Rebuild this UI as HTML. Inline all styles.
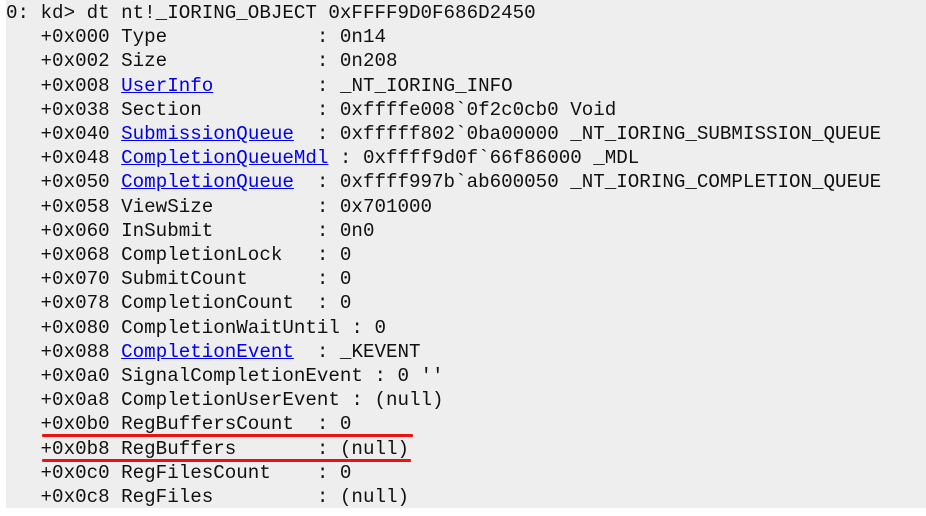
<!DOCTYPE html>
<html><head><style>
html,body{margin:0;padding:0;background:#fff;width:926px;height:516px;overflow:hidden}
#bg{position:absolute;left:6px;top:0;width:920px;height:508px;background:#eeeeee}
pre{position:absolute;left:6px;top:1px;margin:0;font-family:"Liberation Mono",monospace;font-size:19.2px;line-height:24.2px;color:#111;letter-spacing:0}
a{color:#0000ee;text-decoration:underline}
.r{position:absolute;height:3px;background:#ee1111;border-radius:1px}
</style></head><body>
<div id="bg"></div>
<pre>0: kd&gt; dt nt!_IORING_OBJECT 0xFFFF9D0F686D2450
   +0x000 Type             : 0n14
   +0x002 Size             : 0n208
   +0x008 <a>UserInfo</a>         : _NT_IORING_INFO
   +0x038 Section          : 0xffffe008`0f2c0cb0 Void
   +0x040 <a>SubmissionQueue</a>  : 0xfffff802`0ba00000 _NT_IORING_SUBMISSION_QUEUE
   +0x048 <a>CompletionQueueMdl</a> : 0xffff9d0f`66f86000 _MDL
   +0x050 <a>CompletionQueue</a>  : 0xffff997b`ab600050 _NT_IORING_COMPLETION_QUEUE
   +0x058 ViewSize         : 0x701000
   +0x060 InSubmit         : 0n0
   +0x068 CompletionLock   : 0
   +0x070 SubmitCount      : 0
   +0x078 CompletionCount  : 0
   +0x080 CompletionWaitUntil : 0
   +0x088 <a>CompletionEvent</a>  : _KEVENT
   +0x0a0 SignalCompletionEvent : 0 ''
   +0x0a8 CompletionUserEvent : (null)
   +0x0b0 RegBuffersCount  : 0
   +0x0b8 RegBuffers       : (null)
   +0x0c0 RegFilesCount    : 0
   +0x0c8 RegFiles         : (null)</pre>
<div class="r" style="left:42px;top:434px;width:371px"></div>
<div class="r" style="left:42px;top:459px;width:369px"></div>
</body></html>
